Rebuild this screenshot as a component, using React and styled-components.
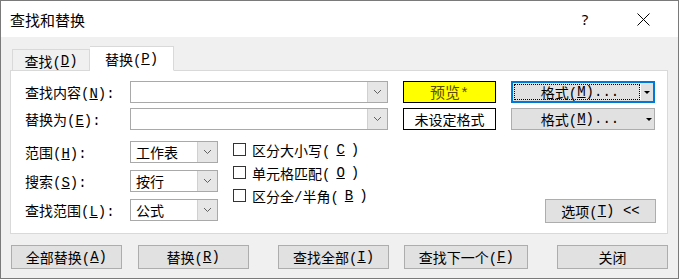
import React from 'react'
import styled, { createGlobalStyle } from 'styled-components'

const Global = createGlobalStyle`
    body {
        margin: 0;
        background: #ffffff;
        font-family: "Liberation Mono", "Noto Sans CJK SC", monospace;
        font-size: 14px;
        color: #000;
    }
    * { box-sizing: border-box; }
`
const Window = styled.div`
    width: 679px;
    height: 279px;
    border: 1px solid #7a7a7a;
    background: #f0f0f0;
    display: flex;
    flex-direction: column;
`
const TitleBar = styled.div`
    height: 36px;
    background: #fff;
    display: flex;
    align-items: center;
    padding-left: 9px;
    font-family: "Noto Sans CJK SC", sans-serif;
    font-size: 15px;
`
const Title = styled.div`
    flex: 1;
`
const TitleBtn = styled.div`
    width: ${p => p.w}px;
    height: 36px;
    display: flex;
    align-items: center;
    justify-content: center;
    font-family: "Noto Sans", sans-serif;
    font-size: 15px;
`
const Body = styled.div`
    flex: 1;
    padding: 9px 10px 9px 9px;
    display: flex;
    flex-direction: column;
`
const Tabs = styled.div`
    display: flex;
    align-items: flex-end;
    margin-left: 2px;
    height: 24px;
    position: relative;
    z-index: 1;
`
const Tab = styled.div`
    width: ${p => p.w}px;
    height: ${p => p.active ? 25 : 22}px;
    margin-bottom: -1px;
    border: 1px solid #d9d9d9;
    border-bottom-color: ${p => p.active ? '#fff' : '#d9d9d9'};
    border-left-width: ${p => p.active ? 0 : 1}px;
    background: ${p => p.active ? '#fff' : '#f0f0f0'};
    display: flex;
    align-items: center;
    justify-content: center;
    padding-top: ${p => p.active ? 0 : 1}px;
`
const Panel = styled.div`
    height: 164px;
    background: #fff;
    border: 1px solid #d9d9d9;
    padding: 10px 11px 10px 14px;
    display: flex;
    flex-direction: column;
`
const FieldRow = styled.div`
    display: flex;
    align-items: center;
    height: 22px;
    margin-bottom: 5px;
`
const Label = styled.div`
    width: ${p => p.w || 105}px;
    white-space: nowrap;
`
const Combo = styled.div`
    width: ${p => p.w}px;
    height: 22px;
    border: 1px solid #a9a9a9;
    background: #fff;
    display: flex;
`
const ComboText = styled.div`
    flex: 1;
    padding-left: 5px;
    display: flex;
    align-items: center;
`
const ComboDrop = styled.div`
    width: 20px;
    background: #e6e6e6;
    border-left: 1px solid #d0d0d0;
    display: flex;
    align-items: center;
    justify-content: center;
`
const Swatch = styled.div`
    width: 93px;
    height: 22px;
    margin-left: 15px;
    border: 1px solid #000;
    background: ${p => p.bg};
    color: ${p => p.fg};
    display: flex;
    align-items: center;
    justify-content: center;
    font-size: ${p => p.big ? 15 : 14}px;
`
const FormatBtn = styled.div`
    width: 144px;
    height: 22px;
    margin-left: 15px;
    border: ${p => p.focus ? '2px solid #0078d7' : '1px solid #adadad'};
    background: #e1e1e1;
    display: flex;
    padding: ${p => p.focus ? '1px' : '0'};
`
const FormatMain = styled.div`
    flex: 1;
    display: flex;
    align-items: center;
    justify-content: center;
    border: ${p => p.focus ? '1px dotted #000' : '1px solid transparent'};
    padding-left: 6px;
`
const FormatArrow = styled.div`
    width: 12px;
    display: flex;
    align-items: center;
    justify-content: center;
    border-left: 1px solid ${p => p.focus ? '#fff' : 'transparent'};
    &::after {
        content: "";
        border-left: 3px solid transparent;
        border-right: 3px solid transparent;
        border-top: 3px solid #000;
    }
`
const Options = styled.div`
    margin-top: 6px;
    display: flex;
    flex: 1;
`
const SelectCol = styled.div`
    display: flex;
    flex-direction: column;
    gap: 7px;
`
const SelectRow = styled.div`
    display: flex;
    align-items: center;
    height: 22px;
`
const CheckCol = styled.div`
    margin-left: 15px;
    margin-top: -3px;
    display: flex;
    flex-direction: column;
`
const CheckRow = styled.div`
    height: 23px;
    display: flex;
    align-items: center;
    gap: 6px;
`
const Box = styled.div`
    width: 13px;
    height: 13px;
    border: 1px solid #333;
    background: #fff;
`
const Spacer = styled.div`
    flex: 1;
`
const Button = styled.div`
    width: ${p => p.w}px;
    height: 24px;
    margin-left: ${p => p.ml || 0}px;
    border: 1px solid #adadad;
    background: #e1e1e1;
    display: flex;
    align-items: center;
    justify-content: center;
    white-space: pre;
    align-self: ${p => p.end ? 'flex-end' : 'auto'};
`
const ButtonRow = styled.div`
    display: flex;
    margin-top: 11px;
    margin-left: 1px;
`
const Key = styled.u`
    text-underline-offset: 1px;
`

const Chevron = () => (
    <svg width="9" height="6" viewBox="0 0 9 6">
        <polyline points="1,1 4.5,4.5 8,1" fill="none" stroke="#606060" strokeWidth="1" />
    </svg>
)

const Close = () => (
    <svg width="13" height="13" viewBox="0 0 13 13">
        <path d="M0.5 0.5 L12.5 12.5 M12.5 0.5 L0.5 12.5" stroke="#000" strokeWidth="1" />
    </svg>
)

const k = (text, key) => <>{text}(<Key>{key}</Key>)</>

function App() {
    return (
        <>
            <Global />
            <Window>
                <TitleBar>
                    <Title>查找和替换</Title>
                    <TitleBtn w={46}>?</TitleBtn>
                    <TitleBtn w={70}><Close /></TitleBtn>
                </TitleBar>
                <Body>
                    <Tabs>
                        <Tab w={78}>{k('查找', 'D')}</Tab>
                        <Tab w={84} active>{k('替换', 'P')}</Tab>
                    </Tabs>
                    <Panel>
                        <FieldRow>
                            <Label>{k('查找内容', 'N')}:</Label>
                            <Combo w={258}><ComboText /><ComboDrop><Chevron /></ComboDrop></Combo>
                            <Swatch bg="#ffff00" fg="#5a4c00" big>预览*</Swatch>
                            <FormatBtn focus>
                                <FormatMain focus>{k('格式', 'M')}...</FormatMain>
                                <FormatArrow focus />
                            </FormatBtn>
                        </FieldRow>
                        <FieldRow>
                            <Label>{k('替换为', 'E')}:</Label>
                            <Combo w={258}><ComboText /><ComboDrop><Chevron /></ComboDrop></Combo>
                            <Swatch bg="#fff" fg="#000">未设定格式</Swatch>
                            <FormatBtn>
                                <FormatMain>{k('格式', 'M')}...</FormatMain>
                                <FormatArrow />
                            </FormatBtn>
                        </FieldRow>
                        <Options>
                            <SelectCol>
                                <SelectRow>
                                    <Label>{k('范围', 'H')}:</Label>
                                    <Combo w={88}><ComboText>工作表</ComboText><ComboDrop><Chevron /></ComboDrop></Combo>
                                </SelectRow>
                                <SelectRow>
                                    <Label>{k('搜索', 'S')}:</Label>
                                    <Combo w={88}><ComboText>按行</ComboText><ComboDrop><Chevron /></ComboDrop></Combo>
                                </SelectRow>
                                <SelectRow>
                                    <Label>{k('查找范围', 'L')}:</Label>
                                    <Combo w={88}><ComboText>公式</ComboText><ComboDrop><Chevron /></ComboDrop></Combo>
                                </SelectRow>
                            </SelectCol>
                            <CheckCol>
                                <CheckRow><Box />{k('区分大小写', 'C')}</CheckRow>
                                <CheckRow><Box />{k('单元格匹配', 'O')}</CheckRow>
                                <CheckRow><Box />{k('区分全/半角', 'B')}</CheckRow>
                            </CheckCol>
                            <Spacer />
                            <Button w={111} end>{k('选项', 'T')}{' <<'}</Button>
                        </Options>
                    </Panel>
                    <ButtonRow>
                        <Button w={111}>{k('全部替换', 'A')}</Button>
                        <Button w={111} ml={16}>{k('替换', 'R')}</Button>
                        <Button w={112} ml={29}>{k('查找全部', 'I')}</Button>
                        <Button w={124} ml={15}>{k('查找下一个', 'F')}</Button>
                        <Button w={111} ml={29}>关闭</Button>
                    </ButtonRow>
                </Body>
            </Window>
        </>
    )
}

export default App
